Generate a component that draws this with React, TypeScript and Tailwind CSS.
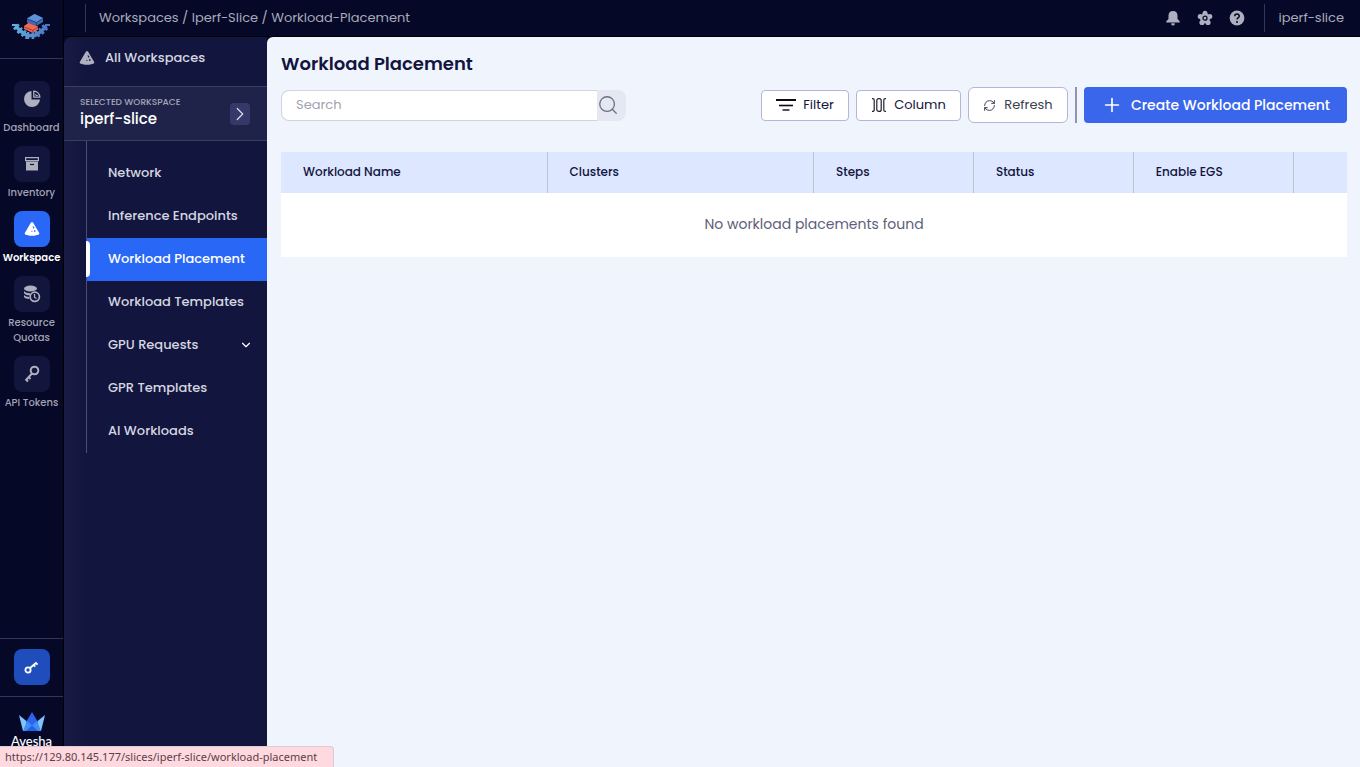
import React from "react";
import { ChevronDown, ChevronRight, Plus, RefreshCw, Search } from "lucide-react";

function Pyramid({ size, fill, hole }: { size: number; fill: string; hole: string }) {
  return (
    <svg width={size} height={size} viewBox="0 0 16 16" aria-hidden="true">
      <path d="M7 1.6c.5-.8 1.5-.8 2 0L15.2 12c.3.6 0 1.1-.5 1.4-4.2 1.9-9.2 1.9-13.4 0-.5-.3-.8-.8-.5-1.4z" fill={fill} />
      <path d="M8.4 5.400h1.300l.8 1.800-1 .5zM9.800 9.500l1.400-.4.5 1.500-1.300.400zM7.200 10.200l1-.5.4 1-.9.400z" fill={hole} />
    </svg>
  );
}

function BrandLogo() {
  return (
    <svg width="40" height="28" viewBox="0 0 40 28" aria-hidden="true">
      <defs>
        <linearGradient id="wing" gradientUnits="userSpaceOnUse" x1="0" y1="0" x2="40" y2="0">
          <stop offset="0" stopColor="#63b3e0" />
          <stop offset="1" stopColor="#4a6fc0" />
        </linearGradient>
      </defs>
      <g fill="none" stroke="url(#wing)">
        <path d="M4.500 13L9.500 18L16 22.500H24L30.500 18L35.500 13" strokeWidth="3.600" />
        <path d="M4.500 13L9.500 18L16 22.500H24L30.500 18L35.500 13" strokeWidth="7" strokeDasharray="2.600 2.300" />
        <path d="M1 12h5M34 12h5" strokeWidth="1.800" />
      </g>
      <path d="M13 13l5-3.500 9 4v3L22 20l-9-4z" fill="#ee6a50" />
      <path d="M13 14l9 3.500 5-3.500M22 17.500V20" stroke="#8c3038" strokeWidth=".8" fill="none" />
      <path d="M16 5.500L23.500 1l8.500 4v4l-6.500 4L16 9.500z" fill="#4168b0" />
      <path d="M16 5.500L23.500 1l8.500 4-6.500 4z" fill="#5b93d8" />
      <path d="M16 6l9.500 3.500L32 5.500M25.500 9.500V13" stroke="#24366f" strokeWidth=".8" fill="none" />
    </svg>
  );
}

function AveshaMark() {
  return (
    <svg width="26" height="20" viewBox="0 0 26 20" aria-hidden="true">
      <path d="M0 3l8 6.500L9 19H4z" fill="#7cc6fb" />
      <path d="M26 3l-8 6.500L17 19h5z" fill="#7cc6fb" />
      <path d="M13 0l6 10-2 9H9L7 10z" fill="#2f63ea" />
      <path d="M8 9l5 4.500L18 9l4 10H4z" fill="#3f8ef5" />
      <path d="M13 13.500L19 19H7z" fill="#2360e8" />
    </svg>
  );
}

function PieIcon() {
  return (
    <svg width="18" height="18" viewBox="0 0 18 18" aria-hidden="true">
      <path d="M8.500 1v8.500h8.500A8 8 0 1 1 8.500 1z" fill="#aeafbf" />
      <path d="M10.800 1.200v6h6c-.2-3.200-2.700-5.800-6-6z" fill="none" stroke="#aeafbf" strokeWidth="1.300" />
      <path d="M12.800 4v1.500h2" fill="none" stroke="#aeafbf" strokeWidth="1" />
    </svg>
  );
}

function BoxIcon() {
  return (
    <svg width="14" height="14" viewBox="0 0 14 14" aria-hidden="true">
      <path d="M.6.600h12.800v3H.6z" fill="none" stroke="#aeafbf" strokeWidth="1.200" />
      <path d="M1 4.500h12V13.500H1z" fill="#aeafbf" />
      <path d="M5 7.500h4" stroke="#13163c" strokeWidth="1.200" />
    </svg>
  );
}

function QuotaIcon() {
  return (
    <svg width="18" height="18" viewBox="0 0 18 18" aria-hidden="true">
      <ellipse cx="7.500" cy="3.500" rx="6.500" ry="3" fill="#aeafbf" />
      <path d="M1 6c1 1.800 4 2.300 6.500 2.200L7 10.300C4 10.300 1.500 9.500 1 8zM1 10c1 1.300 3 2 5.200 2l.3 2C4 14 1.500 13.300 1 12z" fill="#aeafbf" />
      <circle cx="11.800" cy="11.800" r="4.600" fill="#13163c" stroke="#aeafbf" strokeWidth="1.700" />
      <path d="M11.500 9v3.200l2 1.300" fill="none" stroke="#aeafbf" strokeWidth="1.300" />
    </svg>
  );
}

function TokenKeyIcon() {
  return (
    <svg width="16" height="18" viewBox="0 0 16 18" fill="none" stroke="#aeafbf" aria-hidden="true">
      <circle cx="10.500" cy="5.500" r="3.800" strokeWidth="2" />
      <path d="M8 8.500L1.500 15.500M2 14.500l2 2M4.500 12l2 2" strokeWidth="1.900" />
    </svg>
  );
}

function SmallKeyIcon() {
  return (
    <svg width="16" height="16" viewBox="0 0 16 16" fill="none" stroke="#fff" aria-hidden="true">
      <circle cx="4" cy="11" r="2.600" strokeWidth="1.800" />
      <path d="M6 9l6.500-5.500M9.500 5.800l1.800 1.800M11.800 3.800l1.800 1.800" strokeWidth="1.800" />
    </svg>
  );
}

function BellIcon() {
  return (
    <svg width="16" height="16" viewBox="0 0 16 16" fill="#aeafbf" aria-hidden="true">
      <path d="M8 1c3 0 4.500 2 4.500 4.500V9l2.200 2.200v1.300H1.300v-1.300L3.500 9V5.500C3.500 3 5 1 8 1zM6.300 13.200h3.400v1a1.700 1.300 0 0 1-3.400 0z" />
    </svg>
  );
}

function GearIcon() {
  return (
    <svg width="16" height="16" viewBox="0 0 16 16" aria-hidden="true">
      <g fill="#aeafbf">
        <circle cx="8" cy="3.200" r="2.500" />
        <circle cx="12.800" cy="6.600" r="2.500" />
        <circle cx="11" cy="12.500" r="2.600" />
        <circle cx="5" cy="12.500" r="2.600" />
        <circle cx="3.200" cy="6.600" r="2.500" />
        <circle cx="8" cy="8.200" r="5" />
      </g>
      <circle cx="8" cy="8.200" r="2" fill="none" stroke="#050827" strokeWidth="1.200" />
    </svg>
  );
}

function HelpIcon() {
  return (
    <svg width="16" height="16" viewBox="0 0 16 16" aria-hidden="true">
      <circle cx="8" cy="8" r="7.400" fill="#aeafbf" />
      <path d="M5.700 6.200C5.800 3.300 10.400 3.500 10.300 6.200 10.200 7.700 8 7.800 8 9.600" fill="none" stroke="#050827" strokeWidth="1.500" />
      <circle cx="8" cy="11.900" r="1" fill="#050827" />
    </svg>
  );
}

function FilterIcon() {
  return (
    <svg width="20" height="12" viewBox="0 0 20 12" stroke="#0a0b18" aria-hidden="true">
      <path d="M0 1h20" strokeWidth="2" />
      <path d="M3 6.500h14" strokeWidth="1.600" />
      <path d="M6.500 11h7" strokeWidth="1.400" />
    </svg>
  );
}

function ColumnIcon() {
  return (
    <svg width="16" height="14" viewBox="0 0 16 14" fill="none" stroke="#20222c" strokeWidth="1.200" aria-hidden="true">
      <path d="M1 .600h.700a1.500 1.500 0 0 1 1.500 1.500v9.800a1.500 1.500 0 0 1-1.500 1.500H1" />
      <rect x="5.800" y=".6" width="4.400" height="12.800" rx="2" />
      <path d="M15 .600h-.700a1.500 1.500 0 0 0-1.500 1.500v9.800a1.500 1.500 0 0 0 1.500 1.500H15" />
    </svg>
  );
}

const railItems = [
  { label: "Dashboard", icon: <PieIcon /> },
  { label: "Inventory", icon: <BoxIcon /> },
  { label: "Workspace", icon: <Pyramid size={16} fill="#fff" hole="#2968f6" />, active: true },
  { label: "Resource Quotas", icon: <QuotaIcon /> },
  { label: "API Tokens", icon: <TokenKeyIcon /> },
];

const navItems = [
  "Network",
  "Inference Endpoints",
  "Workload Placement",
  "Workload Templates",
  "GPU Requests",
  "GPR Templates",
  "AI Workloads",
];

const columns = [
  { label: "Workload Name", width: "w-1/4" },
  { label: "Clusters", width: "w-1/4" },
  { label: "Steps", width: "w-[15%]" },
  { label: "Status", width: "w-[15%]" },
  { label: "Enable EGS", width: "w-[15%]" },
];

function Rail() {
  return (
    <aside className="flex w-16 shrink-0 flex-col border-r border-black">
      <a href="#home" aria-label="Home" className="flex h-[59px] shrink-0 justify-center border-b border-[#33365a] pt-[13px] pr-0.5">
        <BrandLogo />
      </a>
      <nav className="mt-[22px] flex flex-col gap-[11px]">
        {railItems.map((item) => (
          <a key={item.label} href="#rail" className="flex flex-col items-center gap-[3px]">
            <span
              className={
                item.active
                  ? "flex size-9 items-center justify-center rounded-lg bg-[#2968f6]"
                  : "flex size-9 items-center justify-center rounded-lg bg-[#13163c]"
              }
            >
              {item.icon}
            </span>
            <span
              className={
                item.active
                  ? "text-center text-[10px] leading-[15px] font-semibold text-white"
                  : "text-center text-[10px] leading-[15px] font-medium text-[#a3a4b5]"
              }
            >
              {item.label}
            </span>
          </a>
        ))}
      </nav>
      <div className="mt-auto flex h-[59px] shrink-0 items-start justify-center border-y border-[#33365a] pt-[10px]">
        <button type="button" aria-label="Access keys" className="flex size-9 items-center justify-center rounded-lg bg-[#1f4dbb]">
          <SmallKeyIcon />
        </button>
      </div>
      <div className="flex h-[70px] shrink-0 flex-col items-center pt-[15px]">
        <AveshaMark />
        <span className="font-['Lato',sans-serif] text-[13px] leading-[18px] font-medium text-white">Avesha</span>
      </div>
    </aside>
  );
}

function TopBar() {
  return (
    <header className="flex h-[37px] shrink-0 items-center justify-between border-b border-black pr-4 pl-[21px] text-[13px] text-[#a9aaba]">
      <div className="border-l border-[#33365a] py-1 pl-[13px] leading-5">Workspaces / Iperf-Slice / Workload-Placement</div>
      <div className="flex items-center">
        <div className="flex gap-4 pr-[19px]">
          <button type="button" aria-label="Notifications"><BellIcon /></button>
          <button type="button" aria-label="Settings"><GearIcon /></button>
          <button type="button" aria-label="Help"><HelpIcon /></button>
        </div>
        <div className="border-l border-[#33365a] py-1 pl-[14px] leading-5">iperf-slice</div>
      </div>
    </header>
  );
}

function Sidebar() {
  return (
    <aside className="w-[203px] shrink-0 rounded-tl-lg bg-linear-to-r from-[#191b45] to-[#12153d] to-10% text-[13px] font-medium text-[#d5d6e0]">
      <a href="#all" className="flex h-[49px] items-center gap-[10px] pb-2 pl-[15px]">
        <Pyramid size={16} fill="#aeafbf" hole="#12153d" />
        All Workspaces
      </a>
      <div className="flex h-[55px] items-center justify-between border-y border-[#3a3d63] bg-[#202349] pr-[17px] pl-4">
        <div className="pb-0.5">
          <div className="text-[9px] leading-3 font-medium text-[#a6a7b9]">SELECTED WORKSPACE</div>
          <div className="text-[15px] leading-[22px] font-medium text-white">iperf-slice</div>
        </div>
        <button type="button" aria-label="Open workspace" className="flex h-[22px] w-5 items-center justify-center rounded-sm bg-[#353869] text-[#dcdde8]">
          <ChevronRight size={22} strokeWidth={1.300} className="shrink-0" />
        </button>
      </div>
      <nav className="ml-[22px] border-l border-[#4b4e6e] pt-[11px]">
        {navItems.map((label) => (
          <a
            key={label}
            href="#nav"
            className={
              label === "Workload Placement"
                ? "relative flex h-[43px] items-center bg-[#2968f6] pb-0.5 pl-[21px] text-white"
                : "flex h-[43px] items-center justify-between pr-[14px] pb-px pl-[21px]"
            }
          >
            {label === "Workload Placement" && <span className="absolute top-[3px] -left-px h-9 w-1 rounded-r bg-white" />}
            {label}
            {label === "GPU Requests" && <ChevronDown size={14} className="text-white" />}
          </a>
        ))}
      </nav>
    </aside>
  );
}

function Toolbar() {
  return (
    <div className="mt-[10px] flex h-9 items-center justify-between">
      <form className="flex h-[31px] w-[345px]">
        <input
          type="text"
          aria-label="Search"
          placeholder="Search"
          className="min-w-0 flex-1 rounded-l-lg border border-r-0 border-[#d1d3de] bg-white px-[14px] text-[13px] leading-5 outline-none placeholder:text-[#a0a3b1]"
        />
        <button type="button" aria-label="Submit search" className="w-[29px] rounded-r-lg bg-[#e5e7f3] text-[#6b7080]">
          <Search size={22} strokeWidth={1.400} />
        </button>
      </form>
      <div className="flex items-center gap-[7px]">
        <button type="button" className="flex h-[31px] w-[88px] items-center justify-center gap-[7px] rounded border border-[#b4b5d8] bg-white text-[13px] text-[#12153d]">
          <FilterIcon />Filter
        </button>
        <button type="button" className="flex h-[31px] w-[105px] items-center justify-center gap-[7px] rounded border border-[#b4b5d8] bg-white text-[13px] text-[#12153d]">
          <ColumnIcon />Column
        </button>
        <button type="button" className="flex h-9 w-[100px] items-center justify-center gap-2 rounded-md border border-[#b4b5d8] bg-white text-[13px] text-[#3c4052]">
          <RefreshCw size={13} strokeWidth={1.800} />Refresh
        </button>
        <span className="h-9 w-0.5 bg-[#9193b5]" />
        <button type="button" className="flex h-9 w-[263px] items-center justify-center gap-2 rounded bg-[#3966ea] text-sm font-medium text-white">
          <Plus size={22} strokeWidth={1.800} />Create Workload Placement
        </button>
      </div>
    </div>
  );
}

export default function App() {
  return (
    <div className="flex h-screen bg-[#050827] font-['Poppins','Inter',sans-serif]">
      <Rail />
      <div className="flex min-w-0 flex-1 flex-col">
        <TopBar />
        <div className="flex min-h-0 flex-1">
          <Sidebar />
          <main className="min-w-0 flex-1 rounded-tl-md bg-[#f0f4fd] pt-[14px] pr-[13px] pl-[14px]">
            <h1 className="text-lg leading-[26px] font-semibold text-[#12153d]">Workload Placement</h1>
            <Toolbar />
            <table className="mt-[29px] w-full table-fixed border-separate border-spacing-0">
              <thead>
                <tr className="h-[41px] bg-[#dde7ff] text-left text-xs text-[#12153d]">
                  {columns.map((column) => (
                    <th key={column.label} scope="col" className={`${column.width} border-r border-[#bfc3cf] pb-0.5 pl-[22px] font-medium`}>
                      {column.label}
                    </th>
                  ))}
                  <td />
                </tr>
              </thead>
              <tbody>
                <tr className="h-16 bg-white">
                  <td colSpan={6} className="pb-0.5 text-center text-sm text-[#5d6079]">No workload placements found</td>
                </tr>
              </tbody>
            </table>
          </main>
        </div>
      </div>
      <div className="fixed bottom-0 left-0 flex h-[21px] items-center rounded-tr border-t border-r border-[#e3c9d2] bg-[#ffd9e0] pr-4 pl-[5px] font-['Noto_Sans',sans-serif] text-[11px] text-[#5a4048]">
        https://129.80.145.177/slices/iperf-slice/workload-placement
      </div>
    </div>
  );
}
